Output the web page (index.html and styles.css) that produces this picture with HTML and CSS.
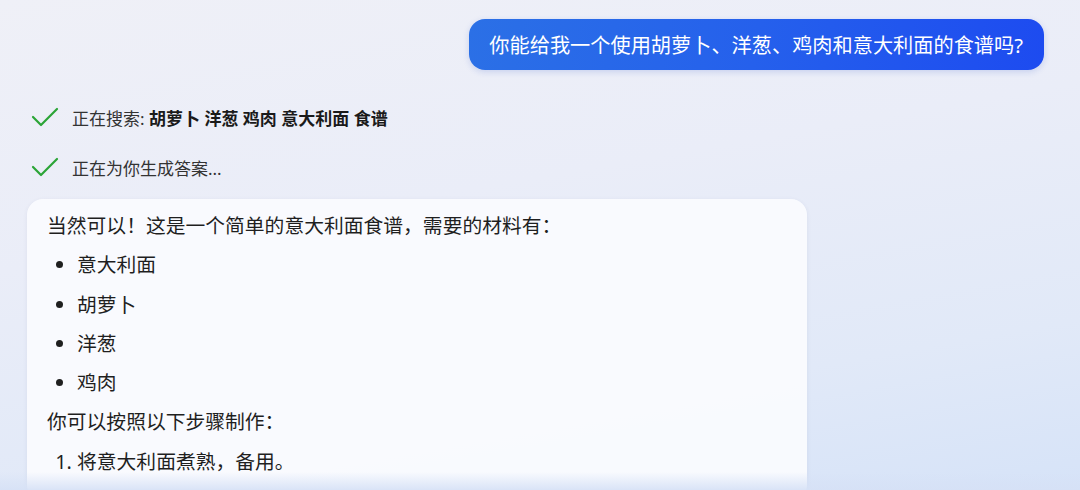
FILE: index.html
```html
<!DOCTYPE html>
<html>
	<head>
		<meta charset="UTF-8">
		<title>食谱对话</title>
		<link rel="stylesheet" href="styles.css">
	</head>
	<body>
		<div class="chat">
			<div class="userRow">
				<div class="bubble">你能给我一个使用胡萝卜、洋葱、鸡肉和意大利面的食谱吗?</div>
			</div>
			<div class="status">
				<div class="statusItem">
					<svg class="check" width="28" height="22" viewBox="0 0 28 22"><path d="M2 11 L10 19 L26 3" fill="none" stroke="#2ba437" stroke-width="2.2" stroke-linecap="round" stroke-linejoin="round"/></svg>
					<span>正在搜索: <b>胡萝卜 洋葱 鸡肉 意大利面 食谱</b></span>
				</div>
				<div class="statusItem">
					<svg class="check" width="28" height="22" viewBox="0 0 28 22"><path d="M2 11 L10 19 L26 3" fill="none" stroke="#2ba437" stroke-width="2.2" stroke-linecap="round" stroke-linejoin="round"/></svg>
					<span>正在为你生成答案...</span>
				</div>
			</div>
			<div class="answer">
				<p>当然可以！这是一个简单的意大利面食谱，需要的材料有：</p>
				<ul>
					<li>意大利面</li>
					<li>胡萝卜</li>
					<li>洋葱</li>
					<li>鸡肉</li>
				</ul>
				<p>你可以按照以下步骤制作：</p>
				<ol>
					<li>将意大利面煮熟，备用。</li>
				</ol>
			</div>
		</div>
		<div class="bottomFade"></div>
	</body>
</html>
```

FILE: styles.css
```css
*,
*::before,
*::after{
	box-sizing: border-box;
}
html,body{
	margin: 0;
	height: 100%;
	overflow: hidden;
}
body{
	font-family: "Noto Sans", "Noto Sans CJK SC", sans-serif;
	color: #1f1f1f;
	background: linear-gradient(170deg, #eff0f7 0%, #eaedf8 40%, #e1e9f8 75%, #d6e3f8 100%);
}
.chat{
	padding: 19px 36px 0 27px;
}
.userRow{
	display: flex;
	justify-content: flex-end;
}
.bubble{
	height: 51px;
	padding: 0 21px 0 20px;
	display: flex;
	align-items: center;
	font-size: 20.2px;
	color: #fff;
	border-radius: 16px;
	background: linear-gradient(100deg, #2b70e6 0%, #2560ec 50%, #1d4bf0 100%);
	box-shadow: 0 2px 6px rgba(40,80,200,0.18);
}
.status{
	padding: 36px 0 0 4px;
	display: flex;
	flex-direction: column;
	gap: 28px;
}
.statusItem{
	display: flex;
	align-items: center;
	gap: 13px;
	font-size: 17px;
	color: #333;
	height: 22px;
}
.statusItem b{
	color: #1a1a1a;
	font-weight: 700;
}
.answer{
	width: 780px;
	margin-top: 21px;
	padding: 7px 20px 20px;
	background: rgba(250,251,254,0.94);
	border-radius: 16px;
	box-shadow: 0 1px 4px rgba(60,70,120,0.08);
	font-size: 19.8px;
	line-height: 39.3px;
}
.answer p,
.answer ul,
.answer ol{
	margin: 0;
}
.answer ul,
.answer ol{
	padding-left: 30px;
}
.bottomFade{
	position: absolute;
	left: 0;
	right: 0;
	bottom: 0;
	height: 18px;
	background: linear-gradient(to bottom, rgba(225,232,248,0), rgba(214,225,246,0.9));
}
```
